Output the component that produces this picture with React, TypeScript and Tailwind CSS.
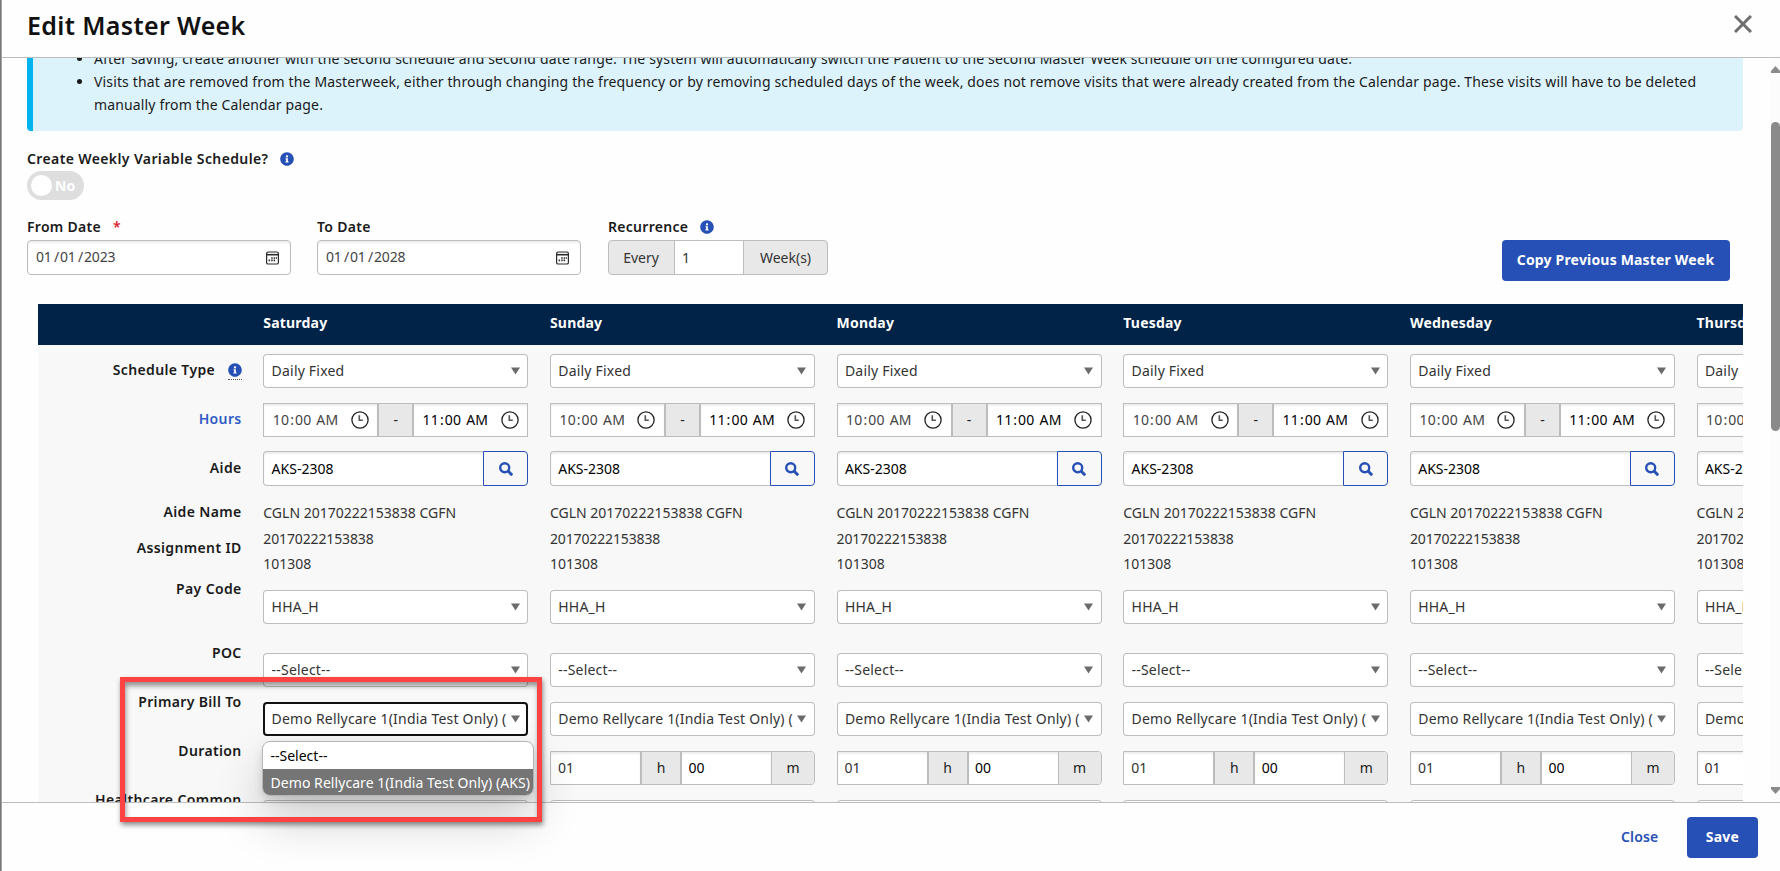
import React from "react";
import { FaInfoCircle } from "react-icons/fa";

const days = ["Saturday", "Sunday", "Monday", "Tuesday", "Wednesday", "Thursday"];

const labels: { text: string; gap: string; info?: boolean; link?: boolean }[] = [
  { text: "Schedule Type", gap: "mt-[15px]", info: true },
  { text: "Hours", gap: "mt-[29px]", link: true },
  { text: "Aide", gap: "mt-[29px]" },
  { text: "Aide Name", gap: "mt-[24px]" },
  { text: "Assignment ID", gap: "mt-[16px]" },
  { text: "Pay Code", gap: "mt-[21px]" },
  { text: "POC", gap: "mt-[44px]" },
  { text: "Primary Bill To", gap: "mt-[29px]" },
  { text: "Duration", gap: "mt-[29px]" },
  { text: "Healthcare Common", gap: "mt-[29px]" },
];

function Info() {
  return <FaInfoCircle className="size-[14px] text-[#2650b5]" />;
}

function CalendarIcon() {
  return (
    <svg className="h-[14px] w-[13px]" viewBox="0 0 13 14" fill="none" stroke="#2b2b2b">
      <rect x="0.6" y="1" width="11.8" height="12" rx="1.6" strokeWidth="1.2" />
      <path d="M0.8 3.7H12.2" strokeWidth="1.6" />
      <path d="M5.2 7h1.5M7.6 7h1.5M9.8 7h1.2M2.6 9.4h1.5M5.2 9.4h1.5M7.6 9.4h1.5" strokeWidth="1.6" />
    </svg>
  );
}

function ClockIcon() {
  return (
    <svg className="size-[18px] shrink-0" viewBox="0 0 18 18" fill="none" stroke="#222">
      <circle cx="9" cy="9" r="8.1" strokeWidth="1.3" />
      <path d="M8.3 4.2V9.3H11.8" strokeWidth="1.6" stroke="#555" />
    </svg>
  );
}

function SearchIcon() {
  return (
    <svg className="size-[14px]" viewBox="0 0 14 14" fill="none" stroke="#2650b5">
      <circle cx="5.7" cy="5.7" r="4.5" strokeWidth="2.4" />
      <path d="M8.8 8.8L13.2 13.2" strokeWidth="3" />
    </svg>
  );
}

function Select({ value, focused, className }: { value: string; focused?: boolean; className: string }) {
  return (
    <div
      className={`${className} flex h-[34px] items-center justify-between rounded-[4px] bg-white pr-[8.5px] pl-[8.3px] ${
        focused ? "shadow-[inset_0_0_0_2px_#111]" : "shadow-[inset_0_0_0_1px_#bdbdbd]"
      }`}
    >
      <span className="w-[238px] overflow-hidden tracking-[0.2px] whitespace-nowrap text-[#333]">{value}</span>
      <svg className="h-[8px] w-[9px] shrink-0" viewBox="0 0 9 8">
        <path d="M0 0.5H9L4.5 7.5Z" fill="#6b6b6b" />
      </svg>
    </div>
  );
}

function Time({ hour }: { hour: string }) {
  return (
    <span className="tracking-[0.25px]">
      {hour}
      <span className="px-[0.8px]">:</span>00<span className="pl-[1px]"> AM</span>
    </span>
  );
}

function DayColumn({ day, focused }: { day: string; focused: boolean }) {
  const inset = "shadow-[inset_0_2px_2px_rgba(0,0,0,0.07)]";
  return (
    <div className="w-[286.67px] shrink-0">
      <div className="h-[41px] bg-[#002347] pt-[9px] leading-5 font-bold tracking-[0.2px] text-white">{day}</div>
      <div className="w-[265px]">
        <Select value="Daily Fixed" className="mt-[9px]" />
        <div className="mt-[15px] flex h-[34px] border border-[#bdbdbd] bg-white">
          <div className={`flex w-[113px] items-center justify-between pr-[8.5px] pl-[8.5px] text-[#444] ${inset}`}>
            <Time hour="10" />
            <ClockIcon />
          </div>
          <div className="flex w-[37px] items-center justify-center border-x-2 border-[#bdbdbd] bg-[#e8e8e8] text-[#222]">-</div>
          <div className={`flex flex-1 items-center justify-between pr-[8.5px] pl-[8.3px] text-black ${inset}`}>
            <Time hour="11" />
            <ClockIcon />
          </div>
        </div>
        <div className="mt-[14px] flex h-[35px]">
          <div className={`flex flex-1 items-center rounded-l-[4px] border border-r-0 border-[#bdbdbd] bg-white pl-[7.3px] text-black ${inset}`}>
            AKS-2308
          </div>
          <div className="flex w-[45px] items-center justify-center rounded-r-[4px] border border-[#2650b5] bg-[#f8f8f8]">
            <SearchIcon />
          </div>
        </div>
        <div className="mt-[14px] h-[76px] text-[#333]">
          <div className="leading-[26px]">CGLN 20170222153838 CGFN</div>
          <div className="leading-[26px] tracking-[-0.13px]">20170222153838</div>
          <div className="leading-[24px]">101308</div>
        </div>
        <Select value="HHA_H" className="mt-[14px]" />
        <Select value="--Select--" className="mt-[29px]" />
        <Select value="Demo Rellycare 1(India Test Only) (" focused={focused} className="mt-[15px]" />
        <div className="mt-[15px] flex h-[34px] rounded-r-[4px] border border-[#bdbdbd] bg-white">
          <div className={`flex w-[89px] items-center pl-[7px] text-[#333] ${inset}`}>01</div>
          <div className="flex w-[42px] items-center justify-center border-x-2 border-[#bdbdbd] bg-[#e8e8e8] text-[#222]">h</div>
          <div className={`flex w-[89px] items-center pl-[6.5px] text-black ${inset}`}>00</div>
          <div className="flex flex-1 items-center justify-center rounded-r-[3px] border-l border-[#bdbdbd] bg-[#e8e8e8] text-[#222]">m</div>
        </div>
        <Select value="" className="mt-[15px]" />
      </div>
    </div>
  );
}

function DateField({ label, value, required }: { label: string; value: string[]; required?: boolean }) {
  return (
    <div className="w-[264px]">
      <div className="flex h-[20px] gap-[12px] leading-5 font-semibold tracking-[0.3px]">
        {label}
        {required && <span className="text-[#d8232f]">*</span>}
      </div>
      <div className="mt-[3px] flex h-[35px] items-center justify-between rounded-[4px] border border-[#bdbdbd] bg-white pr-[11px] pl-[8px] text-[#444] shadow-[inset_0_2px_2px_rgba(0,0,0,0.07)]">
        <span className="pb-[1px] tracking-[-0.15px]">
          {value[0]}
          <span className="pr-[1px] pl-[2.2px]">/</span>
          {value[1]}
          <span className="pr-[1px] pl-[2.2px]">/</span>
          {value[2]}
        </span>
        <CalendarIcon />
      </div>
    </div>
  );
}

export default function App() {
  return (
    <div className="relative flex h-[871px] w-[1780px] overflow-hidden bg-[#fefefe] font-['Noto_Sans','Open_Sans',sans-serif] text-[14px] leading-5 text-[#1a1a1a]">
      <div className="w-[2px] shrink-0 border-r border-[#a5a5a5] bg-[#777]" />
      <div className="flex min-w-0 flex-1 flex-col">
        <header className="flex h-[58px] shrink-0 items-start justify-between border-b border-[#bdbdbd] pr-[28px] pl-[25px]">
          <h1 className="pt-[8px] text-[25px] leading-[34px] font-semibold tracking-[0.36px] text-[#111]">Edit Master Week</h1>
          <svg className="mt-[15px] size-[18px]" viewBox="0 0 18 18" stroke="#6e6e6e" strokeWidth="3">
            <path d="M1 1L17 17M17 1L1 17" />
          </svg>
        </header>

        <div className="flex h-[744px] shrink-0 overflow-hidden">
          <main className="ml-[25px] w-[1716px] shrink-0">
            <div className="h-[73px] overflow-hidden rounded-b-[4px] border-l-[6px] border-[#00b4f0] bg-[#dcf3fc]">
              <ul className="-mt-[11px] w-[1690px] list-disc pl-[61px] leading-[23px] tracking-[0.147px] text-[#1a1a1a]">
                <li>
                  After saving, create another with the second schedule and second date range. The system will automatically
                  switch the Patient to the second Master Week schedule on the configured date.
                </li>
                <li>
                  Visits that are removed from the Masterweek, either through changing the frequency or by removing scheduled
                  days of the week, does not remove visits that were already created from the Calendar page. These visits will
                  have to be deleted
                  <br />
                  manually from the Calendar page.
                </li>
              </ul>
            </div>

            <div className="mt-[18px] flex h-[20px] items-center gap-[11.5px] font-semibold tracking-[0.38px]">
              Create Weekly Variable Schedule?
              <Info />
            </div>
            <div className="mt-[2px] flex h-[29px] w-[57px] items-center gap-[3px] rounded-full bg-[#dedede] pl-[4px] font-bold text-white">
              <span className="size-[21px] rounded-full bg-white" />
              No
            </div>

            <div className="mt-[17px] flex">
              <DateField label="From Date" value={["01", "01", "2023"]} required />
              <div className="w-[26px]" />
              <DateField label="To Date" value={["01", "01", "2028"]} />
              <div className="ml-[27px] w-[220px]">
                <div className="flex h-[20px] items-center gap-[12px] font-semibold tracking-[0.3px]">
                  Recurrence
                  <Info />
                </div>
                <div className="mt-[3px] flex h-[35px] rounded-[4px] border border-[#bdbdbd] bg-[#e8e8e8] text-[#333]">
                  <div className="flex w-[65px] items-center justify-center pr-[1px]">Every</div>
                  <div className="flex w-[70px] items-center border-x border-[#bdbdbd] bg-white pl-[7px]">1</div>
                  <div className="flex flex-1 items-center justify-center">Week(s)</div>
                </div>
              </div>
              <button className="mt-[23px] mr-[13px] ml-auto h-[41px] w-[228px] rounded-[4px] bg-[#2650b5] pr-[1px] pb-[2px] font-bold tracking-[0.18px] text-white">
                Copy Previous Master Week
              </button>
            </div>

            <section className="mt-[23px] ml-[11px] flex h-[540px] overflow-hidden bg-[#f8f8f8]">
              <div className="w-[225.3px] shrink-0">
                <div className="h-[41px] bg-[#002347]" />
                <div className="flex flex-col items-end pr-[21.7px] font-semibold tracking-[0.36px] whitespace-nowrap">
                  {labels.map((l) => (
                    <div key={l.text} className={`${l.gap} flex h-[20px] items-center gap-[12.5px] ${l.link ? "text-[#2f5bc4]" : ""}`}>
                      {l.text}
                      {l.info && (
                        <span className="flex h-[19px] items-start border-b border-dotted border-[#555] pt-[2px]">
                          <Info />
                        </span>
                      )}
                    </div>
                  ))}
                </div>
              </div>
              {days.map((d, i) => (
                <DayColumn key={d} day={d} focused={i === 0} />
              ))}
            </section>
          </main>

          <div className="ml-[28px] flex w-[9px] flex-col items-center bg-[#fcfcfc] pt-[8px] pb-[8px]">
            <svg className="h-[7px] w-[9px]" viewBox="0 0 9 7">
              <path d="M4.5 0L9 5V7H0V5Z" fill="#8a8a8a" />
            </svg>
            <div className="mt-[49px] h-[309px] w-[9px] rounded-full bg-[#8a8a8a]" />
            <svg className="mt-auto h-[7px] w-[9px]" viewBox="0 0 9 7">
              <path d="M4.5 7L9 2V0H0V2Z" fill="#8a8a8a" />
            </svg>
          </div>
        </div>

        <footer className="flex flex-1 items-start justify-end border-t border-[#bdbdbd] pt-[14px] pr-[22px] font-bold">
          <button className="mr-[28.5px] h-[41px] pb-[2px] font-semibold tracking-[0.2px] text-[#2650b5]">Close</button>
          <button className="h-[41px] w-[71px] rounded-[4px] bg-[#2650b5] pb-[2px] tracking-[0.2px] text-white">Save</button>
        </footer>
      </div>

      <div className="absolute top-[741px] left-[262px] h-[55px] w-[272px] overflow-visible rounded-[8px] border border-[#b5b5b5] bg-white shadow-[0_24px_48px_rgba(0,0,0,0.2),0_4px_10px_rgba(0,0,0,0.12)]">
        <div className="h-[27px] pl-[7.5px] leading-[27px] text-black">--Select--</div>
        <div className="h-[26px] rounded-b-[7px] bg-[#757575] pl-[7.5px] leading-[27px] tracking-[0.06px] whitespace-nowrap text-white">
          Demo Rellycare 1(India Test Only) (AKS)
        </div>
      </div>
      <div className="absolute top-[677px] left-[120px] h-[145px] w-[422px] border-[5px] border-[#ff4242] shadow-[1px_3px_5px_rgba(0,0,0,0.45),inset_1px_4px_5px_rgba(0,0,0,0.4)]" />
    </div>
  );
}
